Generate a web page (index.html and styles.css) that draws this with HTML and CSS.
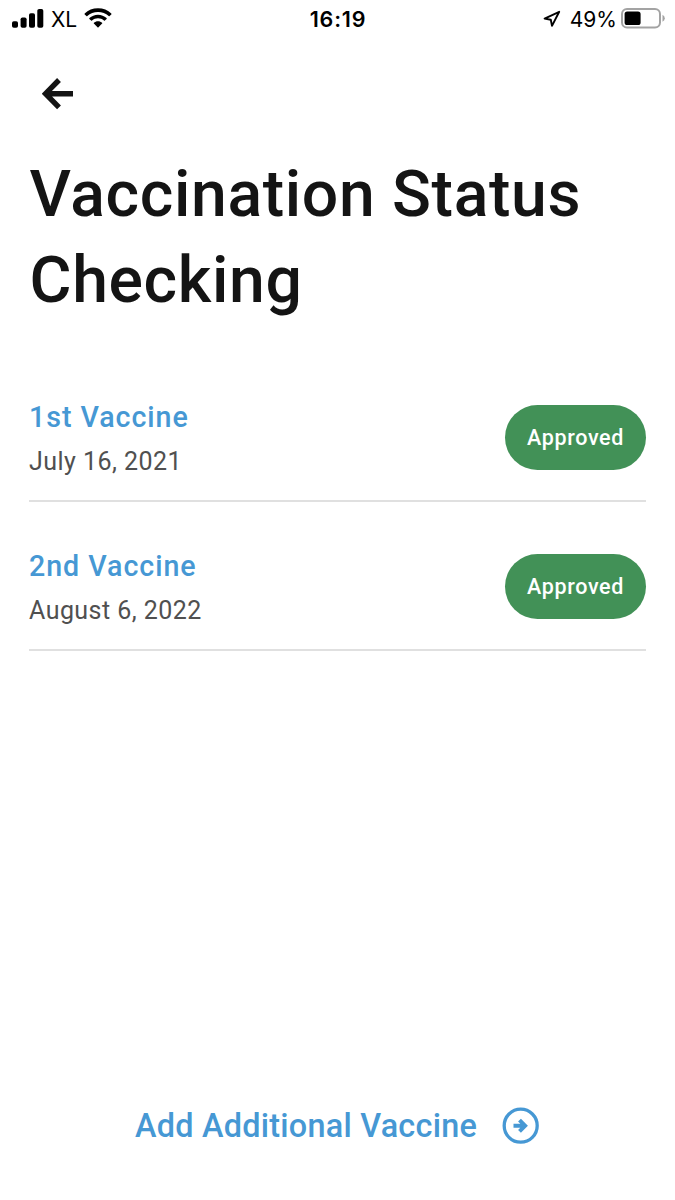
FILE: index.html
```html
<!DOCTYPE html>
<html lang="en">
<head>
<meta charset="utf-8">
<title>Vaccination Status Checking</title>
<link rel="stylesheet" href="styles.css">
</head>
<body>
<div class="screen">
  <div class="status-bar">
    <div class="status-left">
      <svg class="signal" width="32" height="20" viewBox="0 0 32 20"><rect x="0" y="12.3" width="6" height="6.5" rx="1.8"/><rect x="8.6" y="8.500" width="6" height="10.3" rx="1.8"/><rect x="17" y="4.300" width="6" height="14.5" rx="1.8"/><rect x="25.3" y="0" width="6" height="18.8" rx="1.8"/></svg>
      <span class="carrier">XL</span>
      <svg class="wifi" width="28" height="20" viewBox="0 0 28 20"><path d="M14 .3C8.800 .3 4.100 2.200 .7 5.500Q.3 6 .7 6.400L2.400 8Q2.800 8.400 3.300 8C6.200 5.300 9.900 3.900 14 3.900S21.800 5.300 24.700 8Q25.200 8.400 25.600 8L27.300 6.400Q27.700 6 27.300 5.500C23.900 2.200 19.200 .3 14 .3Z"/><path d="M14 6.700C10.700 6.700 7.700 8 5.400 10Q5 10.500 5.400 10.900L7.100 12.500Q7.500 12.900 8 12.500C9.700 11.100 11.700 10.300 14 10.300S18.300 11.100 20 12.500Q20.500 12.900 20.900 12.500L22.600 10.900Q23 10.500 22.600 10C20.300 8 17.300 6.700 14 6.700Z"/><path d="M14 13.200C12.300 13.200 11 13.800 9.900 14.700Q9.500 15.100 9.900 15.600L13.500 19.200Q14 19.700 14.500 19.200L18.100 15.600Q18.500 15.100 18.100 14.700C17 13.800 15.700 13.200 14 13.200Z"/></svg>
    </div>
    <div class="clock">16:19</div>
    <div class="status-right">
      <svg class="location" width="18" height="18" viewBox="0 0 18 18"><path d="M16.200 1.800 1.600 8.600 7.800 9.700 9 15.900Z"/></svg>
      <span class="percent">49%</span>
      <svg class="battery" width="44" height="21" viewBox="0 0 44 21"><rect class="battery-shell" x="1" y="1" width="38" height="18.500" rx="5"/><rect x="3.600" y="3.500" width="16" height="13.500" rx="2.600"/><path class="battery-tip" d="M41.500 6.700Q43.800 8 43.800 10.200T41.500 13.700Z"/></svg>
    </div>
  </div>
  <div class="nav">
    <svg width="32" height="32" viewBox="0 0 32 32"><path class="back-arrow" d="M31 15.700H5M17 2 3.500 15.700 17 29.400"/></svg>
  </div>
  <h1 class="title">Vaccination Status<br>Checking</h1>
  <div class="list">
    <div class="row">
      <div class="details">
        <div class="name">1st Vaccine</div>
        <div class="date">July 16, 2021</div>
      </div>
      <div class="badge">Approved</div>
    </div>
    <div class="row">
      <div class="details">
        <div class="name">2nd Vaccine</div>
        <div class="date">August 6, 2022</div>
      </div>
      <div class="badge">Approved</div>
    </div>
  </div>
  <div class="footer">
    <span class="add">Add Additional Vaccine</span>
    <svg width="38" height="38" viewBox="0 0 38 38"><g class="circle-arrow"><circle cx="18.700" cy="18.700" r="16.500"/><path class="circle-glyph" d="M11.500 18.700H23M17.500 13.100 23.100 18.700 17.500 24.300"/></g></svg>
  </div>
</div>
</body>
</html>
```

FILE: styles.css
```css
* { box-sizing: border-box; }
body { margin: 0; background: #fff; font-family: Roboto, sans-serif; color: #141414; }
.screen { width: 675px; height: 1200px; display: flex; flex-direction: column; overflow: hidden; }
.status-bar { height: 37px; display: grid; grid-template-columns: 1fr auto 1fr; align-items: center; padding: 0 10px 0 12px; color: #000; font-family: Inter, sans-serif; font-size: 22px; line-height: 28px; }
.status-left, .status-right { display: flex; align-items: center; }
.status-right { justify-content: flex-end; }
.carrier { margin-left: 7px; font-size: 21px; padding-top: 2px; }
.wifi { margin-left: 7px; margin-top: -2px; }
.clock { font-weight: 600; font-size: 21.500px; letter-spacing: 0.800px; margin-left: -1px; }
.location { margin-right: 9px; fill: none; stroke: #000; stroke-width: 1.900; stroke-linejoin: round; }
.percent { margin-right: 4px; font-size: 21px; padding-top: 2px; }
.battery-shell { fill: none; stroke: #a3a3a3; stroke-width: 2; }
.battery-tip { fill: #a3a3a3; }
.nav { height: 113.500px; padding: 41px 0 0 42px; }
.back-arrow { fill: none; stroke: #141414; stroke-width: 5.400; }
.title { margin: 0; padding-left: 29.500px; font-size: 64.300px; line-height: 86px; font-weight: 500; letter-spacing: 0.650px; }
.list { margin: 50px 29px 0; }
.row { height: 149.400px; display: flex; justify-content: space-between; align-items: flex-start; border-bottom: 2px solid #e0e0e0; }
.row:first-child { height: 129px; padding-top: 32px; }
.row + .row { padding-top: 52.400px; }
.name { font-size: 28.600px; line-height: 43px; font-weight: 500; letter-spacing: 0.960px; color: #4698d4; margin-top: -8.500px; }
.date { font-size: 25px; line-height: 38px; letter-spacing: 0.460px; color: #505050; margin-top: 4px; }
.badge { width: 141px; height: 65px; border-radius: 33px; background: #429157; color: #fff; display: flex; align-items: center; justify-content: center; font-size: 21.500px; font-weight: 500; letter-spacing: 0.660px; }
.footer { margin-top: auto; height: 93px; display: flex; align-items: flex-start; padding-left: 135px; color: #4698d4; }
.add { font-size: 32.400px; line-height: 38px; font-weight: 500; letter-spacing: 0.250px; width: 367px; white-space: nowrap; }
.circle-arrow { fill: none; stroke: #4698d4; stroke-width: 3.300; }
.circle-glyph { stroke-width: 4; }
```
